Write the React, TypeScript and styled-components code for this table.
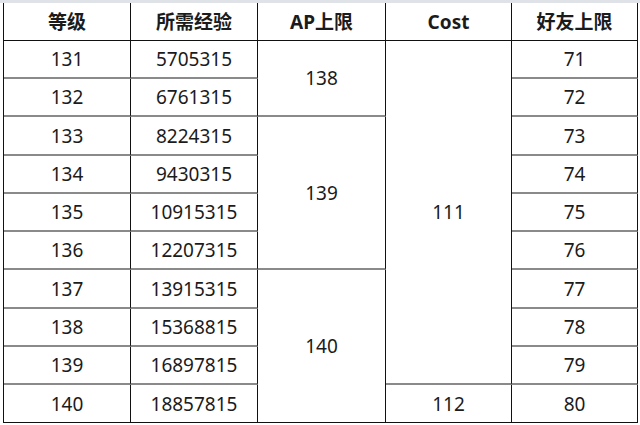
import React from "react";
import styled, { createGlobalStyle } from "styled-components";

const Global = createGlobalStyle`
  html, body { margin: 0; padding: 0; background: #ffffff; }
  body { font-family: "Noto Sans", "Noto Sans CJK SC", sans-serif; color: #1b1b1b; }
`;

const Page = styled.div`
  width: 640px;
  height: 425px;
  overflow: hidden;
  background: #fff;
`;

const TopBand = styled.div`
  height: 3px;
  background: #dfe2e6;
`;

const Wrap = styled.div`
  padding-left: 3px;
`;

const Table = styled.div`
  display: grid;
  width: 635px;
  grid-template-columns: 127px 127px 128px 126px 126px;
  grid-template-rows: 38px 38px 38px 39px 38px 38px 38px 39px 38px 38px 38px;
  border-left: 1px solid #111;
`;

const Cell = styled.div<{ $head?: boolean; $span?: number; $last?: boolean }>`
  display: flex;
  align-items: center;
  justify-content: center;
  box-sizing: border-box;
  border-right: 1px solid #111;
  border-bottom: ${(p) =>
    p.$head ? "1px solid #111" : p.$last ? "1px solid #111" : "2px solid #8a8a8a"};
  font-size: 19px;
  font-weight: ${(p) => (p.$head ? 700 : 400)};
  grid-row: ${(p) => (p.$span ? `span ${p.$span}` : "auto")};
  line-height: 1;
  padding-top: 1px;
`;

const rows = [
  ["131", "5705315"],
  ["132", "6761315"],
  ["133", "8224315"],
  ["134", "9430315"],
  ["135", "10915315"],
  ["136", "12207315"],
  ["137", "13915315"],
  ["138", "15368815"],
  ["139", "16897815"],
  ["140", "18857815"],
];

const ap: Record<number, [string, number]> = { 0: ["138", 2], 2: ["139", 4], 6: ["140", 4] };
const friends = ["71", "72", "73", "74", "75", "76", "77", "78", "79", "80"];

export default function App() {
  return (
    <Page>
      <Global />
      <TopBand />
      <Wrap>
        <Table>
          <Cell $head>等级</Cell>
          <Cell $head>所需经验</Cell>
          <Cell $head>AP上限</Cell>
          <Cell $head>Cost</Cell>
          <Cell $head>好友上限</Cell>
          {rows.map((r, i) => {
            const last = i === rows.length - 1;
            return (
              <React.Fragment key={r[0]}>
                <Cell $last={last}>{r[0]}</Cell>
                <Cell $last={last}>{r[1]}</Cell>
                {ap[i] && (
                  <Cell $span={ap[i][1]} $last={i === 6}>
                    {ap[i][0]}
                  </Cell>
                )}
                {i === 0 && <Cell $span={9}>111</Cell>}
                {i === 9 && <Cell $last>112</Cell>}
                <Cell $last={last}>{friends[i]}</Cell>
              </React.Fragment>
            );
          })}
        </Table>
      </Wrap>
    </Page>
  );
}
